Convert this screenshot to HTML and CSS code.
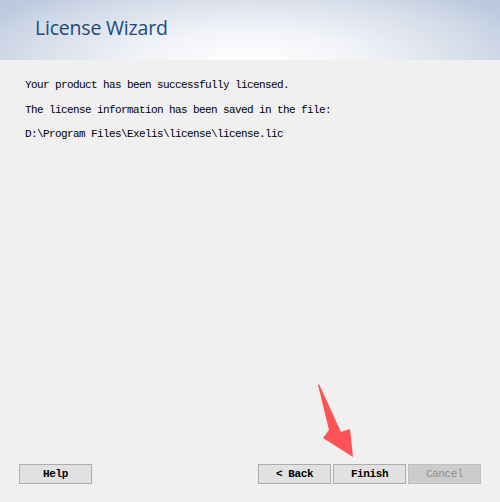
FILE: index.html
```html
<!DOCTYPE html>
<html>
<head>
<meta charset="UTF-8">
<title>License Wizard</title>
<link rel="stylesheet" href="styles.css">
</head>
<body>
<div class="wizard">
	<div class="banner"><h1>License Wizard</h1></div>
	<div class="content">
		<p>Your product has been successfully licensed.</p>
		<p>The license information has been saved in the file:</p>
		<p>D:\Program Files\Exelis\license\license.lic</p>
	</div>
	<div class="footer">
		<button class="btn">Help</button>
		<div class="nav">
			<button class="btn">&lt; Back</button>
			<button class="btn">Finish</button>
			<button class="btn disabled">Cancel</button>
		</div>
	</div>
	<svg class="arrow" width="60" height="90" viewBox="0 0 60 90">
		<polygon points="8,5 19,50 13,58 43,77 40,49 31,52 9,4" fill="#ff5254"/>
	</svg>
</div>
</body>
</html>
```
FILE: styles.css
```css
*{ margin:0; padding:0; box-sizing:border-box;}
html,body{ width:500px; height:502px; background:#f0f0f0; overflow:hidden;}
.wizard{ position:relative; width:500px; height:502px; display:flex; flex-direction:column;}
.banner{ height:60px; padding:15px 0 0 35px; background:radial-gradient(ellipse 300px 90px at 250px 62px, #ffffff 0%, #f2f4f8 35%, #d6dde9 75%, #bccadf 100%);}
.banner h1{ font-family:"Open Sans", sans-serif; font-weight:400; font-size:19.5px; line-height:26px; color:#1c4a7d; letter-spacing:-0.2px;}
.content{ flex:1; padding:19px 0 0 25px;}
.content p{ font-family:"Liberation Mono", monospace; font-size:11px; letter-spacing:-0.6px; line-height:12px; margin-bottom:12.5px; color:#000;}
.footer{ display:flex; justify-content:space-between; padding:0 19px 18px 19px;}
.nav{ display:flex; gap:2px;}
.btn{ width:73px; height:20px; background:#e1e1e1; border:1px solid #adadad; font-family:"Liberation Mono", monospace; font-size:11px; letter-spacing:-0.4px; color:#000; font-weight:bold;}
.btn.disabled{ background:#cccccc; border-color:#bfbfbf; color:#8c8c8c; font-weight:normal;}
.arrow{ position:absolute; left:310px; top:380px;}
```
